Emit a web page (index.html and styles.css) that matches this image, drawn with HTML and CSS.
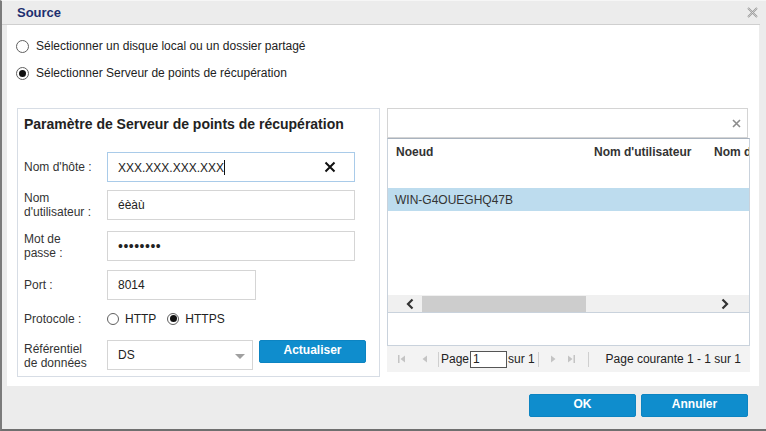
FILE: index.html
```html
<!DOCTYPE html>
<html lang="fr">
<head>
<meta charset="utf-8">
<title>Source</title>
<link rel="stylesheet" href="styles.css">
</head>
<body>
<div class="dialog">
  <div class="titlebar">
    <span class="title">Source</span>
    <svg class="close" width="11" height="11" viewBox="0 0 11 11"><path d="M1 1L10 10M10 1L1 10" stroke="#9a9a9a" stroke-width="1.8"/><path d="M1 1L10 10M10 1L1 10" stroke="#f4f4f4" stroke-width="0.5"/></svg>
  </div>
  <div class="content">
    <div class="choice"><span class="radio"></span><span>Sélectionner un disque local ou un dossier partagé</span></div>
    <div class="choice second"><span class="radio on"></span><span>Sélectionner Serveur de points de récupération</span></div>
    <div class="panels">
      <div class="settings">
        <div class="heading">Paramètre de Serveur de points de récupération</div>
        <div class="row r1">
          <div class="label">Nom d'hôte :</div>
          <div class="input wide focus"><span>XXX.XXX.XXX.XXX<span class="caret"></span></span>
            <svg class="clear" width="12" height="12" viewBox="0 0 12 12"><path d="M1.5 1.5L10.5 10.5M10.5 1.5L1.5 10.5" stroke="#111" stroke-width="2"/></svg>
          </div>
        </div>
        <div class="row r2">
          <div class="label">Nom<br>d'utilisateur :</div>
          <div class="input wide">éèàù</div>
        </div>
        <div class="row r3">
          <div class="label">Mot de<br>passe :</div>
          <div class="input wide dots">••••••••</div>
        </div>
        <div class="row r4">
          <div class="label">Port :</div>
          <div class="input port">8014</div>
        </div>
        <div class="row r5">
          <div class="label">Protocole :</div>
          <div class="proto">
            <span class="radio"></span><span class="ptext">HTTP</span>
            <span class="radio on"></span><span class="ptext">HTTPS</span>
          </div>
        </div>
        <div class="row r6">
          <div class="label">Référentiel<br>de données</div>
          <div class="input select">DS<span class="arrow"></span></div>
          <button class="btn refresh">Actualiser</button>
        </div>
      </div>
      <div class="nodes">
        <div class="search"><svg width="9" height="9" viewBox="0 0 9 9"><path d="M1 1L8 8M8 1L1 8" stroke="#8c8c8c" stroke-width="1.6"/></svg></div>
        <div class="grid">
          <div class="ghead">
            <span class="c1">Noeud</span><span class="c2">Nom d'utilisateur</span><span class="c3">Nom d</span>
          </div>
          <div class="grow">WIN-G4OUEGHQ47B</div>
          <div class="gblank"></div>
          <div class="hscroll">
            <svg class="sa" width="10" height="12" viewBox="0 0 10 12"><path d="M7.5 1.5L3 6L7.5 10.5" fill="none" stroke="#333" stroke-width="2.2"/></svg>
            <div class="thumb"></div>
            <svg class="sa right" width="10" height="12" viewBox="0 0 10 12"><path d="M2.5 1.5L7 6L2.5 10.5" fill="none" stroke="#333" stroke-width="2.2"/></svg>
          </div>
        </div>
        <div class="pager">
          <svg class="pi first" width="10" height="10" viewBox="0 0 10 10"><rect x="1" y="1" width="1.5" height="8" fill="#c4c4c4"/><path d="M8 1.5L3.5 5L8 8.5Z" fill="#c4c4c4"/></svg>
          <svg class="pi prev" width="10" height="10" viewBox="0 0 10 10"><path d="M7 1.5L2.5 5L7 8.5Z" fill="#c4c4c4"/></svg>
          <span class="sep s1"></span>
          <span class="ptxt">Page</span><span class="pinput">1</span><span class="ptxt">sur 1</span>
          <span class="sep s2"></span>
          <svg class="pi next" width="10" height="10" viewBox="0 0 10 10"><path d="M3 1.5L7.5 5L3 8.5Z" fill="#c4c4c4"/></svg>
          <svg class="pi last" width="10" height="10" viewBox="0 0 10 10"><path d="M2 1.5L6.5 5L2 8.5Z" fill="#c4c4c4"/><rect x="7.5" y="1" width="1.5" height="8" fill="#c4c4c4"/></svg>
          <span class="sep s3"></span>
          <span class="status">Page courante 1 - 1 sur 1</span>
        </div>
      </div>
    </div>
  </div>
  <div class="footer">
    <button class="btn big">OK</button>
    <button class="btn big">Annuler</button>
  </div>
</div>
</body>
</html>
```
FILE: styles.css
```css
* { box-sizing: border-box; }
html, body { margin: 0; padding: 0; background: #ffffff; }
body { font-family: "Liberation Sans", Arial, sans-serif; font-size: 12px; color: #333; }

.dialog {
  width: 766px; height: 431px;
  background: #ececec;
  border-left: 2px solid #7b7b7b;
  border-bottom: 2px solid #6f6f6f;
  border-top: 1px solid #f6f6f6;
  display: flex; flex-direction: column;
}
.titlebar {
  height: 24px; flex: none;
  display: flex; align-items: center; justify-content: space-between;
  padding: 0 8px 1px 15px;
  border-bottom: 1px solid #cfcfcf;
  margin-right: 6px;
}
.title { font-weight: bold; font-size: 13px; color: #1d2f6f; }
.close { margin-right: -6px; }

.content {
  background: #fff;
  margin: 0 7px 0 5px;
  height: 361px; flex: none;
  padding-top: 13px;
}
.choice { display: flex; align-items: center; height: 16px; padding-left: 9px; color: #222; }
.choice .radio { margin-right: 7px; }
.choice.second { margin-top: 11px; }

.radio {
  width: 13px; height: 13px; border-radius: 50%;
  border: 1px solid #5f5f5f; background: #fff;
  display: inline-flex; align-items: center; justify-content: center; flex: none;
}
.radio.on::after { content: ""; width: 7px; height: 7px; border-radius: 50%; background: #111; }

.panels { display: flex; margin-top: 27px; padding-left: 10px; gap: 7px; }

.settings {
  width: 363px; height: 269px;
  border: 1px solid #d7dde5;
  padding: 7px 0 0 6px;
}
.heading { font-weight: bold; font-size: 14px; color: #222; line-height: 16px; }
.row { display: flex; align-items: center; }
.label { width: 83px; flex: none; line-height: 14px; color: #333; }
.r1 { margin-top: 20px; }
.r2 { margin-top: 8px; }
.r3 { margin-top: 11px; }
.r4 { margin-top: 9px; }
.r5 { margin-top: 9px; height: 19px; }
.r6 { margin-top: 12px; align-items: flex-start; }
.r6 .label { padding-top: 2px; }

.input {
  height: 30px; border: 1px solid #d5d5d5; background: #fff;
  display: flex; align-items: center; padding-left: 10px;
  color: #222; font-size: 12px;
}
.wide { width: 248px; }
.focus { border-color: #a9cbe9; justify-content: space-between; padding-right: 18px; }
.caret { display: inline-block; width: 1px; height: 15px; background: #111; vertical-align: -3px; }
.dots { font-size: 14px; letter-spacing: 0.5px; }
.port { width: 149px; }
.select { width: 146px; position: relative; }
.arrow {
  position: absolute; right: 7px; top: 13px;
  width: 0; height: 0;
  border-left: 5px solid transparent; border-right: 5px solid transparent; border-top: 5px solid #a0a0a0;
}
.proto { display: flex; align-items: center; color: #222; }
.proto .radio { width: 12px; height: 12px; }
.ptext { margin: 0 11px 0 6px; }

.btn {
  font-family: "Liberation Sans", Arial, sans-serif;
  font-weight: bold; font-size: 12px; color: #fff;
  background: #0f8dcd; border: 1px solid #0c84c2; border-radius: 2px;
  cursor: pointer;
}
.refresh { width: 107px; height: 23px; margin-left: 6px; padding: 0 0 3px; }

.nodes { width: 363px; height: 264px; display: flex; flex-direction: column; }
.search {
  height: 30px; width: 361px; border: 1px solid #d4d4d4;
  display: flex; align-items: center; justify-content: flex-end; padding-right: 6px;
}
.grid {
  border: 1px solid #c9d2dc; border-top: 1px solid #a9b3bf;
  height: 208px; width: 363px;
  display: flex; flex-direction: column; overflow: hidden;
}
.ghead { height: 49px; flex: none; position: relative; font-weight: bold; color: #333; white-space: nowrap; }
.ghead span { position: absolute; top: 6px; }
.c1 { left: 8px; }
.c2 { left: 206px; }
.c3 { left: 326px; }
.grow { height: 23px; flex: none; background: #bddcee; display: flex; align-items: center; padding-left: 7px; color: #333; }
.gblank { height: 84px; flex: none; }
.hscroll {
  height: 18px; flex: none; background: #f0f0f0;
  border-bottom: 1px solid #c9d2dc;
  position: relative;
}
.sa { position: absolute; left: 17px; top: 3px; }
.sa.right { left: 332px; }
.thumb { position: absolute; left: 34px; width: 164px; top: 1px; height: 16px; background: #cdcdcd; }

.pager {
  height: 26px; background: #f3f3f3; width: 363px;
  display: flex; align-items: center; padding-left: 10px; color: #222;
}
.pi { flex: none; }
.prev { margin-left: 13px; }
.sep { width: 1px; height: 15px; background: #cfcfcf; flex: none; }
.s1 { margin: 0 2px 0 8px; }
.s2 { margin: 0 0 0 3px; }
.next { margin-left: 9px; }
.last { margin-left: 8px; }
.s3 { margin-left: 12px; }
.pinput { width: 37px; height: 17px; border: 1px solid #555; background: #fff; padding-left: 2px; line-height: 15px; margin: 0 1px; }
.status { margin-left: auto; margin-right: 9px; }

.footer { flex: 1; display: flex; justify-content: flex-end; align-items: flex-start; padding: 8px 18px 0 0; gap: 5px; }
.big { width: 107px; height: 23px; padding: 0 0 3px; }
```
